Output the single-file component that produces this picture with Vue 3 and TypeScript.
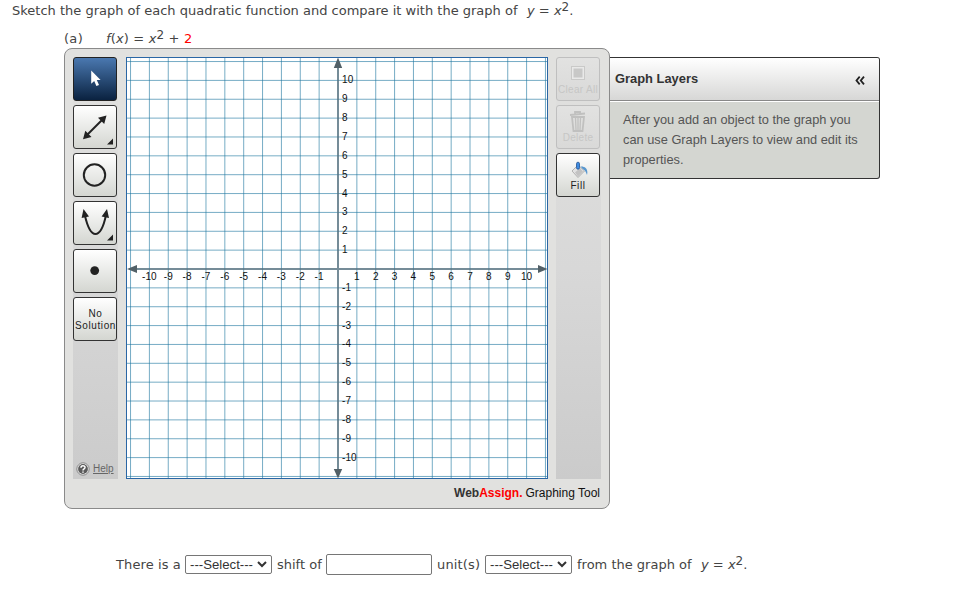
<script setup lang="ts">
import { ref } from 'vue'

const STEP = 18.86
const CENTER = 212

const at = (n: number): number => CENTER + n * STEP
const lines: number[] = Array.from({ length: 23 }, (_, i) => i - 11).filter((n) => n !== 0)
const labels: number[] = lines.filter((n) => Math.abs(n) <= 10)

const direction = ref('')
const side = ref('')
const amount = ref('')
</script>

<template>
  <main class="question">
    <p class="prompt">
      <span class="prompt-text">Sketch the graph of each quadratic function and compare it with the graph of</span>
      <span class="math"><i>y</i> = <i>x</i><sup>2</sup>.</span>
    </p>
    <p class="part">
      <span class="part-label">(a)</span>
      <span class="fn"><i>f</i>(<i>x</i>) = <i>x</i><sup>2</sup> + <b class="given">2</b></span>
    </p>

    <div class="workspace">
      <section class="tool">
        <div class="tool-main">
          <div class="rail">
            <button class="btn active" aria-label="Select">
              <svg width="42" height="42" viewBox="0 0 42 42"><path d="M17.200 12.500v13.200l3-2.700 2.200 5 2.600-1.100-2.200-4.800h3.800z" fill="#fff" /></svg>
            </button>
            <button class="btn" aria-label="Line">
              <svg width="42" height="42" viewBox="0 0 42 42" fill="#222">
                <path d="M13 29L30 12" stroke="#222" stroke-width="2" />
                <path d="M32.500 9.500l-2.300 8.500-6.200-6.200zM9 33.200l2.300-8.500 6.200 6.200zM39 32.500v6h-6z" />
              </svg>
            </button>
            <button class="btn" aria-label="Circle">
              <svg width="42" height="42" viewBox="0 0 42 42"><circle cx="20.500" cy="21" r="10.700" fill="none" stroke="#222" stroke-width="2" /></svg>
            </button>
            <button class="btn" aria-label="Parabola">
              <svg width="42" height="42" viewBox="0 0 42 42" fill="#222">
                <path d="M10.800 13C13.500 25 17.200 32 21.400 32S29.500 25 32 13" fill="none" stroke="#222" stroke-width="2" />
                <path d="M9.500 7l5.500 7.400-7.400 1.500zM33 7l2 8.900-7.400-1.500zM39 32.500v6h-6z" />
              </svg>
            </button>
            <button class="btn" aria-label="Point">
              <svg width="42" height="42" viewBox="0 0 42 42"><circle cx="20.700" cy="20.600" r="4.400" fill="#222" /></svg>
            </button>
            <button class="btn words">No<br />Solution</button>
            <a class="help">
              <svg width="14" height="14" viewBox="0 0 14 14">
                <circle cx="7" cy="7" r="6.200" fill="#eee" stroke="#888" />
                <circle cx="7" cy="7" r="4.900" fill="#5b5b5b" />
                <path d="M5 5.700c0-2.700 4-2.500 4-.3C9 7 7 6.700 7 8.500M7 9.500v1.300" fill="none" stroke="#fff" stroke-width="1.500" />
              </svg>
              <span>Help</span>
            </a>
          </div>

          <svg class="graph" width="422" height="422" viewBox="0 0 422 422">
            <rect width="422" height="422" fill="#fff" />
            <g class="grid">
              <line v-for="n in lines" :key="'v' + n" :x1="at(n)" :x2="at(n)" y1="1" y2="421" />
              <line v-for="n in lines" :key="'h' + n" :y1="at(n)" :y2="at(n)" x1="1" x2="421" />
            </g>
            <path class="axis" d="M212 8V414M8 212H414" />
            <path class="tips" d="M212 .5l4.200 10.500h-8.400zM212 421.500l4.200-9.500h-8.400zM1 212l10-4v8zM421.500 212l-9.500-4v8z" />
            <g class="labels">
              <text v-for="n in labels" :key="'x' + n" :x="at(n)" y="223" text-anchor="middle">{{ n }}</text>
              <text v-for="n in labels" :key="'y' + n" x="216" :y="at(-n) + 3">{{ n }}</text>
            </g>
            <rect x=".5" y=".5" width="421" height="421" fill="none" stroke="#2a66a5" />
          </svg>

          <div class="rail right">
            <button class="btn words disabled" disabled>
              <svg width="16" height="15" viewBox="0 0 16 15">
                <rect x="1.500" y=".5" width="13" height="13" fill="#e9e9e8" stroke="#c9c9c8" />
                <rect x="3.500" y="2.500" width="9" height="9" fill="#c8c8c7" />
              </svg>
              <span>Clear All</span>
            </button>
            <button class="btn words disabled" disabled>
              <svg class="bin" width="18" height="22" viewBox="0 0 18 22">
                <path d="M1 4l15-1.500M6 3.200V1h5v1.800M3 6h12l-1.500 14h-9z" fill="none" stroke="#c0c0bf" stroke-width="1.800" />
                <path d="M6.500 7l.5 12M9 7v12M11.500 7L11 19" stroke="#c0c0bf" stroke-width="1.300" />
              </svg>
              <span>Delete</span>
            </button>
            <button class="btn words fill">
              <svg width="18" height="18" viewBox="0 0 18 18">
                <path d="M2 10l6-6 6.500 6L8 16.500z" fill="#e2e2e2" stroke="#999" stroke-width=".7" />
                <path d="M5 11.500l5-4.500L13 10.500l-5 5z" fill="#c2c2c2" />
                <path d="M10.500 5.500C15 5 18.500 8 17 14c-1-3-2-5-4.300-6z" fill="#5997ce" />
                <rect x="6.500" y="1.200" width="3" height="7" rx="1.500" fill="#3d8be0" stroke="#235394" stroke-width=".8" />
              </svg>
              <span>Fill</span>
            </button>
          </div>
        </div>
        <footer class="brand"><b>Web<em>Assign.</em></b> <span>Graphing Tool</span></footer>
      </section>

      <aside class="layers">
        <header>
          <h2>Graph Layers</h2>
          <svg width="10" height="9" viewBox="0 0 10 9"><path d="M4.700.7L1.500 4.500l3.200 3.800M9 .7L5.800 4.500 9 8.300" fill="none" stroke="#222" stroke-width="1.800" /></svg>
        </header>
        <p>After you add an object to the graph you<br />can use Graph Layers to view and edit its<br />properties.</p>
      </aside>
    </div>

    <div class="answer">
      <span class="there">There is a</span>
      <div class="pick">
        <select v-model="direction"><option value="">---Select---</option></select>
        <svg width="10" height="7" viewBox="0 0 10 7"><path d="M1 1l4 4 4-4" /></svg>
      </div>
      <span class="shift">shift of</span>
      <input v-model="amount" />
      <span class="unit">unit(s)</span>
      <div class="pick">
        <select v-model="side"><option value="">---Select---</option></select>
        <svg width="10" height="7" viewBox="0 0 10 7"><path d="M1 1l4 4 4-4" /></svg>
      </div>
      <span class="from">from the graph of</span>
      <span class="math"><i>y</i> = <i>x</i><sup>2</sup>.</span>
    </div>
  </main>
</template>

<style>
body { background: #fff; }
</style>

<style scoped>
* { box-sizing: border-box; }
.question {
  width: 959px;
  height: 602px;
  overflow: hidden;
  padding-top: 1px;
  font: 13px/20px Verdana, "DejaVu Sans", sans-serif;
  color: #444;
}
p { margin: 0; }
sup { font-size: 12px; line-height: 0; vertical-align: 4px; }
.prompt { display: flex; padding-left: 12px; height: 28px; white-space: nowrap; }
.prompt-text { width: 515px; }
.math { white-space: nowrap; }
.part { display: flex; padding-left: 64px; height: 19px; white-space: nowrap; }
.part-label { width: 42px; letter-spacing: .3px; }
.fn { letter-spacing: .15px; }
.given { color: #f00; font-weight: 400; }
.workspace { display: flex; align-items: flex-start; padding-left: 64px; }
.tool {
  width: 546px;
  height: 461px;
  padding: 8px;
  border: 1px solid #8a8a8a;
  border-radius: 8px;
  background: #e1e1df;
  flex: none;
}
.tool-main { display: flex; gap: 8px; height: 422px; }
.graph { display: block; flex: none; }
.grid line { stroke: #1a749f; stroke-opacity: .6; stroke-width: 1; }
.axis { stroke: #526f7e; stroke-opacity: .8; stroke-width: 2; }
.tips { fill: #526067; }
.labels { font: 10px "Liberation Sans", Arial, sans-serif; fill: #111; letter-spacing: .1px; }
.rail {
  width: 45px;
  display: flex;
  flex-direction: column;
  gap: 4px;
  background: linear-gradient(#e1e1df 0, #d8d8d8 50%, #cbcbcb 100%);
}
.btn {
  width: 44px;
  height: 44px;
  padding: 0;
  border: 1px solid #333;
  border-radius: 3px;
  background: linear-gradient(#fff, #d4d6d1);
  flex: none;
}
.btn svg { display: block; }
.active { background: linear-gradient(#4a78b0, #0a2240); border-color: #222; }
.words {
  display: flex;
  flex-direction: column;
  align-items: center;
  justify-content: center;
  font: 10px/12px "Liberation Sans", Arial, sans-serif;
  color: #222;
  letter-spacing: .6px;
  white-space: nowrap;
}
.rail > .words:not(.disabled):not(.fill) { display: block; padding: 2px 0 0 1px; }
.disabled { border-color: #bfbfbf; background: linear-gradient(#e2e2e1, #d9d9d8); color: #c6c6c5; }
.disabled span { letter-spacing: .3px; }
.right .words { justify-content: flex-end; padding-bottom: 4px; }
.right svg { margin-bottom: 3px; }
.right .bin { margin-bottom: -1px; }
.right .fill svg { margin: 0 0 1px 2px; }
.help {
  display: flex;
  align-items: center;
  gap: 3px;
  margin-top: auto;
  padding: 0 0 1px 3px;
  height: 20px;
  color: #666;
  font: 10px/14px "Liberation Sans", Arial, sans-serif;
  text-decoration: underline;
}
.brand {
  display: flex;
  justify-content: flex-end;
  gap: 3px;
  padding: 5px 1px 0 0;
  font: 12px/18px "Liberation Sans", Arial, sans-serif;
  color: #111;
}
.brand b { color: #333; }
.brand em { color: #f00; font-style: normal; }
.layers {
  width: 270px;
  height: 122px;
  margin-top: 9px;
  border: 1px solid #333;
  border-left: 0;
  border-radius: 0 3px 3px 0;
  overflow: hidden;
  background: #d4d6d1;
  font-family: "Liberation Sans", Arial, sans-serif;
}
.layers header {
  display: flex;
  align-items: center;
  justify-content: space-between;
  height: 44px;
  padding: 0 14px 0 5px;
  border-bottom: 1px solid #fff;
  box-shadow: inset 0 -1px #888;
  background: linear-gradient(#fff, #d6d6d5);
}
.layers h2 { margin: -2px 0 0; font-size: 12.9px; line-height: 20px; color: #333; }
.layers header svg { margin-top: 1px; }
.layers p { padding: 8px 0 0 13px; font-size: 12.8px; line-height: 20px; color: #555; white-space: nowrap; }
.answer { display: flex; align-items: center; height: 21px; margin-top: 45px; padding-left: 116px; white-space: nowrap; }
.there { width: 69px; letter-spacing: .1px; }
.shift { width: 49px; }
.unit { width: 48px; letter-spacing: .15px; }
.from { width: 124px; }
.pick { position: relative; width: 87px; height: 19px; margin-right: 5px; }
.pick select {
  display: block;
  width: 87px;
  height: 19px;
  padding: 0 0 0 4px;
  appearance: none;
  border: 1px solid #767676;
  border-radius: 2px;
  background: #fff;
  color: #333;
  font: 13.200px/17px "Liberation Sans", Arial, sans-serif;
}
.pick svg { position: absolute; right: 5px; top: 6px; pointer-events: none; }
.pick path { fill: none; stroke: #333; stroke-width: 2; }
input { width: 106px; height: 21px; margin: 0 5px 0 0; padding: 1px 2px; border: 1px solid #767676; border-radius: 2px; background: #fff; }
</style>
